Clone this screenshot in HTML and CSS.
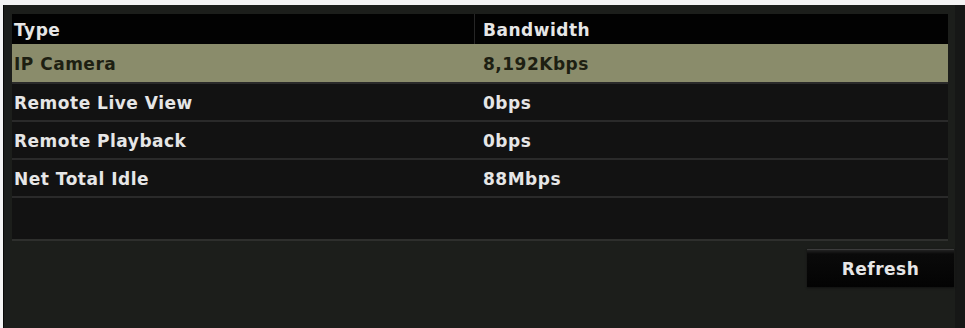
FILE: index.html
```html
<!DOCTYPE html>
<html>
<head>
<meta charset="utf-8">
<link rel="stylesheet" href="styles.css">
</head>
<body>
<div class="screen">
  <div class="panel">
    <div class="row head">
      <div class="cell c1">Type</div>
      <div class="cell c2">Bandwidth</div>
    </div>
    <div class="row sel">
      <div class="cell c1">IP Camera</div>
      <div class="cell c2">8,192Kbps</div>
    </div>
    <div class="row">
      <div class="cell c1">Remote Live View</div>
      <div class="cell c2">0bps</div>
    </div>
    <div class="row">
      <div class="cell c1">Remote Playback</div>
      <div class="cell c2">0bps</div>
    </div>
    <div class="row">
      <div class="cell c1">Net Total Idle</div>
      <div class="cell c2">88Mbps</div>
    </div>
    <div class="row empty"></div>
  </div>
  <div class="actions">
    <button class="btn">Refresh</button>
  </div>
</div>
</body>
</html>
```
FILE: styles.css
```css
html, body {
  margin: 0;
  padding: 0;
}
body {
  background: #f4f4f4;
  width: 965px;
  height: 328px;
  overflow: hidden;
  font-family: "DejaVu Sans", "Liberation Sans", sans-serif;
  font-weight: bold;
  font-size: 17px;
  letter-spacing: 0.5px;
}
.screen {
  margin: 5px 0 0 3px;
  height: 323px;
  background: #1c1e1b;
  border-left: 1px solid #090909;
  box-sizing: border-box;
  padding: 9px 0 0 8px;
  box-shadow: inset -10px 0 0 #161716;
}
.panel {
  width: 936px;
  height: 227px;
  background: #121212;
  border-bottom: 2px solid #2e2f2d;
  box-sizing: border-box;
  display: flex;
  flex-direction: column;
}
.row {
  display: grid;
  grid-template-columns: 462px 1fr;
  height: 38px;
  border-top: 2px solid #2a2a2a;
  box-sizing: border-box;
  color: #e6e6e6;
}
.row.head {
  height: 30px;
  border-top: none;
  background: #020202;
}
.row.sel {
  border-top: none;
  background: #8a8c6b;
  color: #1d1f12;
}
.row.empty {
  flex: 1;
}
.cell {
  display: flex;
  align-items: center;
  white-space: nowrap;
  padding-top: 2px;
}
.c1 {
  padding-left: 2px;
}
.c2 {
  padding-left: 9px;
}
.head .c2 {
  border-left: 1px solid #262626;
  padding-left: 8px;
}
.head .cell {
  padding-top: 1px;
}
.actions {
  display: flex;
  justify-content: flex-end;
  padding-right: 11px;
  margin-top: 8px;
}
.btn {
  width: 147px;
  height: 38px;
  font-family: "DejaVu Sans", "Liberation Sans", sans-serif;
  font-weight: bold;
  font-size: 17px;
  letter-spacing: 0.5px;
  color: #e6e6e6;
  background: linear-gradient(#222 0, #0a0a0a 4px, #030303 100%);
  border: none;
  border-top: 1px solid #3c3c3c;
  box-shadow: 0 1px 2px #111;
  padding: 0;
}
```
